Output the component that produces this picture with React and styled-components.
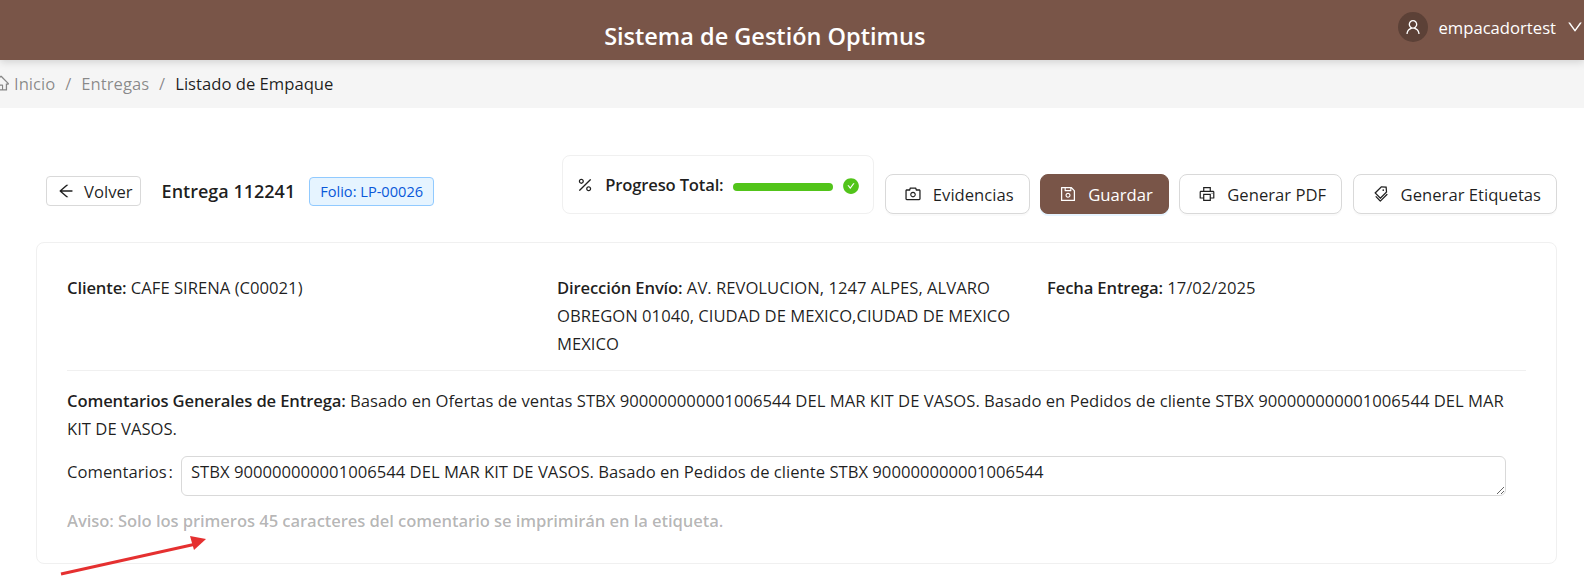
import styled, { createGlobalStyle } from 'styled-components';
import {
  AiOutlineHome,
  AiOutlineArrowLeft,
  AiOutlinePercentage,
  AiOutlineCamera,
  AiOutlineSave,
  AiOutlinePrinter,
  AiOutlineTags,
  AiOutlineUser,
  AiOutlineDown,
  AiFillCheckCircle,
} from 'react-icons/ai';

const GlobalStyle = createGlobalStyle`
  html, body {
    margin: 0;
    padding: 0;
    background: #fff;
    overflow: hidden;
  }
  body {
    font-family: "Open Sans", "Noto Sans", sans-serif;
    font-size: 16.65px;
    color: rgba(0, 0, 0, 0.88);
  }
`;

const Page = styled.div`
  position: relative;
  width: 1584px;
  height: 582px;
  overflow: hidden;
`;

const Header = styled.header`
  position: relative;
  height: 60px;
  display: grid;
  grid-template-columns: 1fr auto;
  align-items: center;
  background: #795548;
  color: #fff;
  box-shadow: 0 2px 8px rgba(0, 0, 0, 0.15);
`;

const Title = styled.div`
  padding: 12px 0 0 131px;
  text-align: center;
  font-size: 23.5px;
  font-weight: 600;
`;

const UserMenu = styled.div`
  display: flex;
  align-items: center;
  gap: 10px;
  padding-bottom: 6px;
`;

const Avatar = styled.span`
  width: 30px;
  height: 30px;
  border-radius: 50%;
  background: #5c4137;
  display: flex;
  align-items: center;
  justify-content: center;
  font-size: 18px;
`;

const Chevron = styled(AiOutlineDown)`
  font-size: 18px;
`;

const Breadcrumb = styled.nav`
  height: 48px;
  box-sizing: border-box;
  padding: 0 0 2px 14px;
  display: flex;
  align-items: center;
  background: #f5f5f5;
  color: rgba(0, 0, 0, 0.45);
`;

const HomeIcon = styled(AiOutlineHome)`
  margin-left: -22px;
  margin-right: 4px;
  font-size: 18px;
`;

const Slash = styled.span`
  margin: 0 10px;
`;

const Current = styled.span`
  color: rgba(0, 0, 0, 0.88);
`;

const Main = styled.main`
  padding: 47px 27px 0 36px;
`;

const Toolbar = styled.div`
  display: flex;
  justify-content: space-between;
  align-items: flex-end;
  padding-left: 10px;
`;

const LeftGroup = styled.div`
  display: flex;
  align-items: center;
  gap: 21px;
  padding-bottom: 8px;
`;

const BackButton = styled.button`
  height: 30px;
  padding: 0 7px 0 10px;
  display: flex;
  align-items: center;
  gap: 9px;
  background: #fff;
  border: 1px solid #d9d9d9;
  border-radius: 4px;
  font: inherit;
  color: inherit;
  svg {
    font-size: 18px;
  }
`;

const Heading = styled.div`
  display: flex;
  align-items: center;
  gap: 14px;
`;

const DeliveryName = styled.span`
  font-size: 18px;
  font-weight: 600;
`;

const Folio = styled.span`
  height: 27px;
  padding: 0 10px;
  display: flex;
  align-items: center;
  background: #e6f4ff;
  border: 1px solid #91caff;
  border-radius: 4px;
  color: #0958d9;
  font-size: 14.6px;
  font-weight: 500;
`;

const RightGroup = styled.div`
  display: flex;
  align-items: flex-end;
  gap: 10.5px;
`;

const ProgressCard = styled.div`
  width: 312px;
  height: 59px;
  box-sizing: border-box;
  padding: 0 0 0 13px;
  display: flex;
  align-items: center;
  gap: 11px;
  border: 1px solid #f0f0f0;
  border-radius: 8px;
  svg:first-child {
    font-size: 18px;
  }
`;

const ProgressLabel = styled.span`
  font-weight: 600;
  letter-spacing: -0.2px;
  white-space: nowrap;
`;

const Track = styled.div`
  flex: none;
  width: 100px;
  height: 8px;
  margin: 4px 0 0 -1px;
  border-radius: 4px;
  background: #52c41a;
`;

const Done = styled(AiFillCheckCircle)`
  margin-top: 3px;
  margin-left: -2px;
  color: #52c41a;
  font-size: 18px;
`;

const ActionButton = styled.button`
  height: 40px;
  padding: 0 15px 0 18px;
  display: flex;
  align-items: center;
  gap: 11px;
  border-radius: 8px;
  border: 1px solid ${({ $primary }) => ($primary ? '#795548' : '#d9d9d9')};
  background: ${({ $primary }) => ($primary ? '#795548' : '#fff')};
  color: ${({ $primary }) => ($primary ? '#fff' : 'rgba(0, 0, 0, 0.88)')};
  box-shadow: 0 2px 0 ${({ $primary }) => ($primary ? 'rgba(5, 145, 255, 0.1)' : 'rgba(0, 0, 0, 0.02)')};
  font: inherit;
  svg {
    font-size: 18px;
  }
`;

const Card = styled.section`
  margin-top: 28px;
  height: 322px;
  box-sizing: border-box;
  padding: 31px 30px 30px;
  border: 1px solid #f0f0f0;
  border-radius: 8px;
  line-height: 28px;
`;

const InfoGrid = styled.div`
  display: grid;
  grid-template-columns: 490px 490px 1fr;
`;

const InfoItem = styled.div`
  padding-right: 20px;
`;

const Strong = styled.strong`
  font-weight: 600;
  letter-spacing: -0.15px;
`;

const Divider = styled.hr`
  margin: 12px 0 16px;
  border: 0;
  border-top: 1px solid #f0f0f0;
`;

const FormRow = styled.div`
  margin-top: 13px;
  padding-right: 20px;
  display: flex;
  align-items: flex-start;
`;

const FieldLabel = styled.label`
  width: 114px;
  flex: none;
  line-height: 32px;
  white-space: nowrap;
`;

const Colon = styled.span`
  margin-left: 2px;
`;

const CommentBox = styled.textarea`
  flex: 1;
  height: 40px;
  box-sizing: border-box;
  padding: 3px 9px;
  border: 1px solid #d9d9d9;
  border-radius: 6px;
  font: inherit;
  line-height: 24px;
  color: rgba(0, 0, 0, 0.88);
  outline: none;
`;

const Notice = styled.div`
  margin-top: 11px;
  color: rgba(0, 0, 0, 0.3);
  font-weight: 600;
  letter-spacing: -0.1px;
`;

const Arrow = styled.svg`
  position: absolute;
  left: 0;
  top: 0;
  pointer-events: none;
`;

export default function App() {
  return (
    <Page>
      <GlobalStyle />
      <Header>
        <Title>Sistema de Gestión Optimus</Title>
        <UserMenu>
          <Avatar><AiOutlineUser /></Avatar>
          <span>empacadortest</span>
          <Chevron />
        </UserMenu>
      </Header>
      <Breadcrumb>
        <HomeIcon />
        <span>Inicio</span>
        <Slash>/</Slash>
        <span>Entregas</span>
        <Slash>/</Slash>
        <Current>Listado de Empaque</Current>
      </Breadcrumb>
      <Main>
        <Toolbar>
          <LeftGroup>
            <BackButton><AiOutlineArrowLeft />Volver</BackButton>
            <Heading>
              <DeliveryName>Entrega 112241</DeliveryName>
              <Folio>Folio: LP-00026</Folio>
            </Heading>
          </LeftGroup>
          <RightGroup>
            <ProgressCard>
              <AiOutlinePercentage />
              <ProgressLabel>Progreso Total:</ProgressLabel>
              <Track />
              <Done />
            </ProgressCard>
            <ActionButton><AiOutlineCamera />Evidencias</ActionButton>
            <ActionButton $primary><AiOutlineSave />Guardar</ActionButton>
            <ActionButton><AiOutlinePrinter />Generar PDF</ActionButton>
            <ActionButton><AiOutlineTags />Generar Etiquetas</ActionButton>
          </RightGroup>
        </Toolbar>
        <Card>
          <InfoGrid>
            <InfoItem><Strong>Cliente:</Strong> CAFE SIRENA (C00021)</InfoItem>
            <InfoItem><Strong>Dirección Envío:</Strong> AV. REVOLUCION, 1247 ALPES, ALVARO OBREGON 01040, CIUDAD DE MEXICO,CIUDAD DE MEXICO MEXICO</InfoItem>
            <InfoItem><Strong>Fecha Entrega:</Strong> 17/02/2025</InfoItem>
          </InfoGrid>
          <Divider />
          <div>
            <Strong>Comentarios Generales de Entrega:</Strong> Basado en Ofertas de ventas STBX 900000000001006544 DEL MAR KIT DE VASOS. Basado en Pedidos de cliente STBX 900000000001006544 DEL MAR KIT DE VASOS.
          </div>
          <FormRow>
            <FieldLabel>Comentarios<Colon>:</Colon></FieldLabel>
            <CommentBox readOnly value="STBX 900000000001006544 DEL MAR KIT DE VASOS. Basado en Pedidos de cliente STBX 900000000001006544" />
          </FormRow>
          <Notice>Aviso: Solo los primeros 45 caracteres del comentario se imprimirán en la etiqueta.</Notice>
        </Card>
      </Main>
      <Arrow width="1584" height="582" viewBox="0 0 1584 582">
        <path d="M61 574L196 544" stroke="#e53030" strokeWidth="3" fill="none" />
        <path d="M190 536L206 539L194 550Z" fill="#e53030" />
      </Arrow>
    </Page>
  );
}
